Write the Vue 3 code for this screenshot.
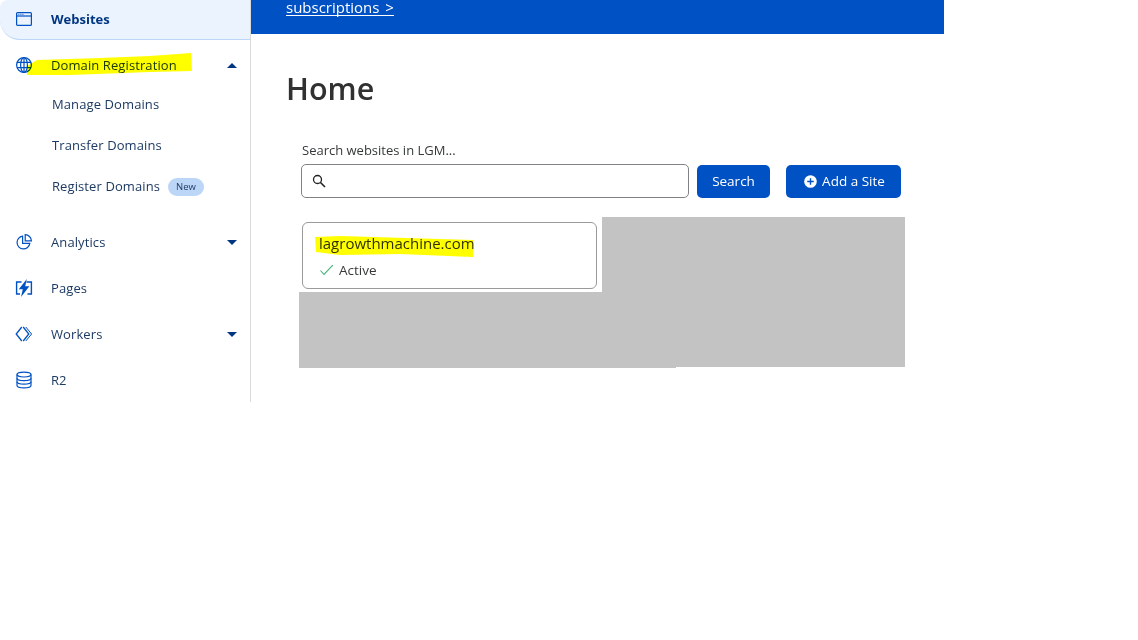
<script setup>
const subs = ['Manage Domains', 'Transfer Domains']
</script>

<template>
  <div class="page">
    <aside class="side">
      <div class="row current">
        <svg class="ico" viewBox="0 0 18 18" fill="none" stroke="#0051c3" stroke-width="1.2">
          <rect x="1.6" y="2.6" width="14.8" height="12.8" rx="1" />
          <path d="M1.6 6h14.8" />
          <path d="M3.5 4.4h.8M5.5 4.4h.8M7.5 4.4h.8" />
        </svg>
        <span>Websites</span>
      </div>
      <div class="row domain">
        <svg class="ico" viewBox="0 0 18 18" fill="none" stroke="#0051c3" stroke-width="1.2">
          <circle cx="9" cy="9" r="7.4" />
          <ellipse cx="9" cy="9" rx="3.4" ry="7.4" />
          <path d="M9 1.6v14.8M2 6.4h14M2 11.6h14" />
        </svg>
        <span>Domain Registration</span>
        <i class="caret up"></i>
      </div>
      <div v-for="s in subs" :key="s" class="sub">{{ s }}</div>
      <div class="sub">Register Domains <em class="new">New</em></div>
      <div class="row first">
        <svg class="ico" viewBox="0 0 18 18" fill="none" stroke="#0051c3" stroke-width="1.2">
          <path d="M7.6 3.200a6.400 6.400 0 1 0 7.200 7.200H7.600z" />
          <path d="M10.200 1.600a6.400 6.400 0 0 1 6.200 6.200h-6.200z" />
        </svg>
        <span>Analytics</span>
        <i class="caret"></i>
      </div>
      <div class="row">
        <svg class="ico" viewBox="0 0 18 18" fill="none">
          <path d="M6.500 3H1.600v12H5M11.500 3h4.900v12H12.500" stroke="#0051c3" stroke-width="1.400" />
          <path d="M11.800 0 3.800 10.200h4L6 18 14.400 7.200h-4.200z" fill="#0051c3" />
        </svg>
        <span>Pages</span>
      </div>
      <div class="row">
        <svg class="ico" viewBox="0 0 18 18" fill="none" stroke="#0051c3" stroke-width="1.3">
          <path d="M6.800 2 1.200 9l5.600 7" />
          <path d="M8.200 2 13.800 9l-5.600 7" />
          <path d="M10.800 2 16.600 9l-5.800 7" stroke-width="1" />
        </svg>
        <span>Workers</span>
        <i class="caret"></i>
      </div>
      <div class="row">
        <svg class="ico" viewBox="0 0 18 18" fill="none" stroke="#0051c3" stroke-width="1.2">
          <ellipse cx="9" cy="3.600" rx="7" ry="2.400" />
          <path d="M2 3.600v10.800C2 15.800 5 16.800 9 16.800s7-1 7-2.400V3.600" />
          <path d="M2 7.200c0 1.400 3 2.400 7 2.400s7-1 7-2.400M2 10.800c0 1.400 3 2.400 7 2.400s7-1 7-2.400" />
        </svg>
        <span>R2</span>
      </div>
    </aside>

    <main class="main">
      <div class="banner"><a class="sublink">subscriptions &gt;</a></div>
      <h1 class="title">Home</h1>
      <section class="content">
        <label class="label">Search websites in LGM...</label>
        <div class="controls">
          <div class="input">
            <svg width="16" height="16" viewBox="0 0 16 16" fill="none" stroke="#222" stroke-width="1.3">
              <circle cx="6.500" cy="6.500" r="4" />
              <path d="M9.500 9.500 14 14" stroke-width="1.600" />
            </svg>
          </div>
          <button class="btn search">Search</button>
          <button class="btn add">
            <svg width="13" height="13" viewBox="0 0 14 14">
              <circle cx="7" cy="7" r="6.800" fill="#fff" />
              <path d="M7 3.500v7M3.500 7h7" stroke="#0051c3" stroke-width="1.500" />
            </svg>
            Add a Site
          </button>
        </div>
        <div class="card">
          <div class="site">lagrowthmachine.com</div>
          <div class="status">
            <svg width="15" height="12" viewBox="0 0 15 12" fill="none" stroke="#46b27a" stroke-width="1.100">
              <path d="M1.500 6.500 5 10.500 13.800 1.200" />
            </svg>
            Active
          </div>
        </div>
      </section>
    </main>

    <div class="redact r1"></div>
    <div class="redact r2"></div>
    <svg class="marker" width="944" height="300" viewBox="0 0 944 300">
      <path d="M27 66 37 60 100 58 150 56 191 53 192 71 150 72 70 75 27 75z" />
      <path d="M315 237 340 236 473 240 473 257 400 254 340 255 316 252z" />
    </svg>
  </div>
</template>

<style>
html, body { background: #fff; }
</style>

<style scoped>
.page {
  position: relative;
  display: flex;
  width: 944px;
  font-family: "Open Sans", "Noto Sans", sans-serif;
  font-size: 13px;
  color: #1d3a63;
}
.side {
  width: 250px;
  height: 402px;
  flex: none;
  border-right: 1px solid #d9d9d9;
  letter-spacing: 0.1px;
}
.row {
  display: flex;
  align-items: center;
  height: 46px;
  padding: 0 13px 0 15px;
}
.ico {
  width: 18px;
  height: 18px;
  flex: none;
  margin-right: 18px;
}
.row span { flex: 1; }
.current {
  height: 38px;
  padding-bottom: 1px;
  background: #ebf3fe;
  border-bottom: 1px solid #bcd6f7;
  border-radius: 8px 0 0 20px;
  font-weight: 700;
  letter-spacing: 0;
  color: #003681;
}
.domain { height: 38px; margin-top: 6px; }
.first { margin-top: 12px; }
.sub {
  display: flex;
  align-items: center;
  box-sizing: border-box;
  height: 41px;
  padding: 0 0 2px 52px;
}
.new {
  margin: 2px 0 0 8px;
  padding: 0 8px;
  height: 18px;
  line-height: 18px;
  border-radius: 9px;
  background: #bcd6f7;
  font-style: normal;
  font-size: 9.500px;
  letter-spacing: 0;
}
.caret {
  width: 0;
  height: 0;
  border-left: 5px solid transparent;
  border-right: 5px solid transparent;
  border-top: 5px solid #003681;
}
.caret.up {
  border-top: 0;
  border-bottom: 5px solid #003681;
}
.main { flex: 1; min-width: 0; }
.banner {
  height: 34px;
  background: #0051c3;
  padding-left: 35px;
}
.sublink {
  display: block;
  width: fit-content;
  color: #fff;
  font-size: 15px;
  line-height: 15px;
  word-spacing: 2px;
  border-bottom: 1px solid #fff;
}
.title {
  margin: 34px 0 0 35px;
  font-size: 30.500px;
  line-height: 41px;
  font-weight: 600;
  color: #313131;
}
.content { margin: 32px 0 0 50px; color: #36393a; }
.label { display: block; line-height: 18px; padding-left: 1px; }
.controls {
  display: flex;
  align-items: flex-start;
  margin-top: 5px;
}
.input {
  display: flex;
  align-items: center;
  box-sizing: border-box;
  width: 388px;
  height: 34px;
  border: 1px solid #808285;
  border-radius: 5px;
  padding-left: 9px;
}
.btn {
  height: 33px;
  margin-top: 1px;
  border: 0;
  border-radius: 5px;
  background: #0051c3;
  color: #fff;
  font: inherit;
  font-size: 13.500px;
  padding: 0 0 2px;
}
.search { width: 73px; margin-left: 8px; }
.add {
  display: flex;
  align-items: center;
  justify-content: center;
  gap: 5px;
  width: 115px;
  margin-left: 16px;
  padding-left: 2px;
}
.add svg { margin-top: 2px; }
.card {
  box-sizing: border-box;
  width: 295px;
  height: 67px;
  margin: 24px 0 0 1px;
  border: 1px solid #9a9a9a;
  border-radius: 6px;
  padding: 8px 16px;
}
.site { font-size: 15px; line-height: 24px; color: #313131; }
.status {
  display: flex;
  align-items: center;
  gap: 5px;
  margin-top: 6px;
  font-size: 13.500px;
  line-height: 18px;
}
.redact { position: absolute; background: #c3c3c3; }
.r1 { left: 602px; top: 217px; width: 303px; height: 150px; }
.r2 { left: 299px; top: 292px; width: 377px; height: 76px; }
.marker {
  position: absolute;
  left: 0;
  top: 0;
  pointer-events: none;
  mix-blend-mode: multiply;
}
.marker path { fill: #ffff00; }
</style>
